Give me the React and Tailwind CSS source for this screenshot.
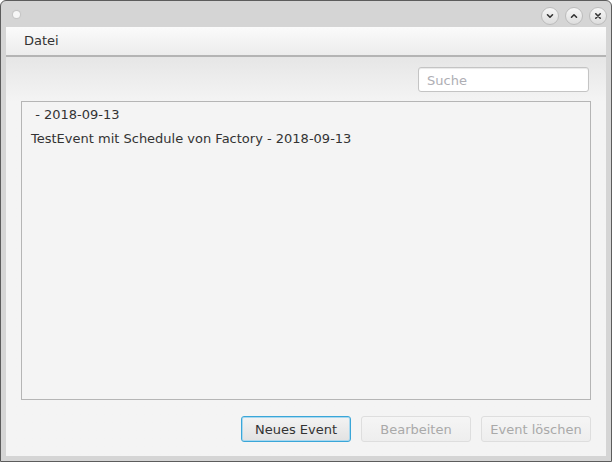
import React from 'react';

const font = { fontFamily: '"DejaVu Sans", "Liberation Sans", sans-serif' };

const TitleButton = ({ children }) => (
  <div className="flex h-[18px] w-[18px] items-center justify-center rounded-full border border-[#bcbcbc] bg-gradient-to-b from-[#f7f7f7] to-[#dddddd]">
    <svg width="10" height="10" viewBox="0 0 10 10" fill="none" stroke="#333333" strokeWidth="1.6" strokeLinecap="round" strokeLinejoin="round">
      {children}
    </svg>
  </div>
);

const ActionButton = ({ label, primary, disabled }) => (
  <button
    type="button"
    disabled={disabled}
    className={
      primary
        ? 'h-[26px] w-[110px] rounded-[3px] border border-[#3aa6d8] bg-gradient-to-b from-[#f3f3f3] to-[#e2e2e2] pt-[1px] text-[13px] text-[#333333] shadow-[inset_0_0_0_1px_#a9d8ef]'
        : 'h-[26px] w-[110px] rounded-[3px] border border-[#dedede] bg-gradient-to-b from-[#f5f5f5] to-[#eeeeee] pt-[1px] text-[13px] text-[#a9a9a9]'
    }
    style={font}
  >
    {label}
  </button>
);

export default function App() {
  const items = [' - 2018-09-13', 'TestEvent mit Schedule von Factory - 2018-09-13'];

  return (
    <div className="flex h-[462px] w-[612px] flex-col rounded-t-[6px] border border-[#5c5c5c] bg-[#d5d5d5]" style={font}>
      {/* title bar */}
      <div className="flex h-[26px] shrink-0 items-center justify-between pl-[12px] pr-[4px]">
        <div className="h-[7px] w-[7px] rounded-full bg-[#f6f6f6] shadow-[0_0_1px_1px_#c4c4c4]" />
        <div className="flex items-center gap-[6px] pt-[3px]">
          <TitleButton>
            <path d="M2.5 3.75 L5 6.25 L7.5 3.75" />
          </TitleButton>
          <TitleButton>
            <path d="M2.5 6.25 L5 3.75 L7.5 6.25" />
          </TitleButton>
          <TitleButton>
            <path d="M2.75 2.75 L7.25 7.25 M7.25 2.75 L2.75 7.25" />
          </TitleButton>
        </div>
      </div>

      {/* window content */}
      <div className="mx-[5px] mb-[5px] flex flex-1 flex-col bg-[#f4f4f4]">
        <div className="flex h-[28px] shrink-0 items-center bg-gradient-to-b from-[#fbfbfb] to-[#ececec] pl-[18px] text-[13px] text-[#333333]">
          Datei
        </div>
        <div className="h-[2px] shrink-0 bg-[#b4b4b4]" />

        <div className="flex flex-1 flex-col bg-gradient-to-b from-[#e6e6e6] to-[#f4f4f4] to-[45px] px-[15px] pt-[10px] pb-[14px]">
          <div className="flex justify-end pr-[2px]">
            <div className="flex h-[25px] w-[171px] items-center rounded-[3px] border border-[#c4c4c4] bg-white pl-[8px] pt-[2px] text-[13px] text-[#aeaeb4] shadow-[inset_0_1px_1px_#e8e8e8]">
              Suche
            </div>
          </div>

          <div className="mt-[9px] flex-1 border border-[#b5b5b5] bg-[#f4f4f4] pt-[1px]">
            {items.map((item) => (
              <div key={item} className="flex h-[24px] items-center whitespace-pre pl-[9px] text-[13px] text-[#333333]">
                {item}
              </div>
            ))}
          </div>

          <div className="mt-[16px] flex justify-end gap-[10px]">
            <ActionButton label="Neues Event" primary />
            <ActionButton label="Bearbeiten" disabled />
            <ActionButton label="Event löschen" disabled />
          </div>
        </div>
      </div>
    </div>
  );
}
